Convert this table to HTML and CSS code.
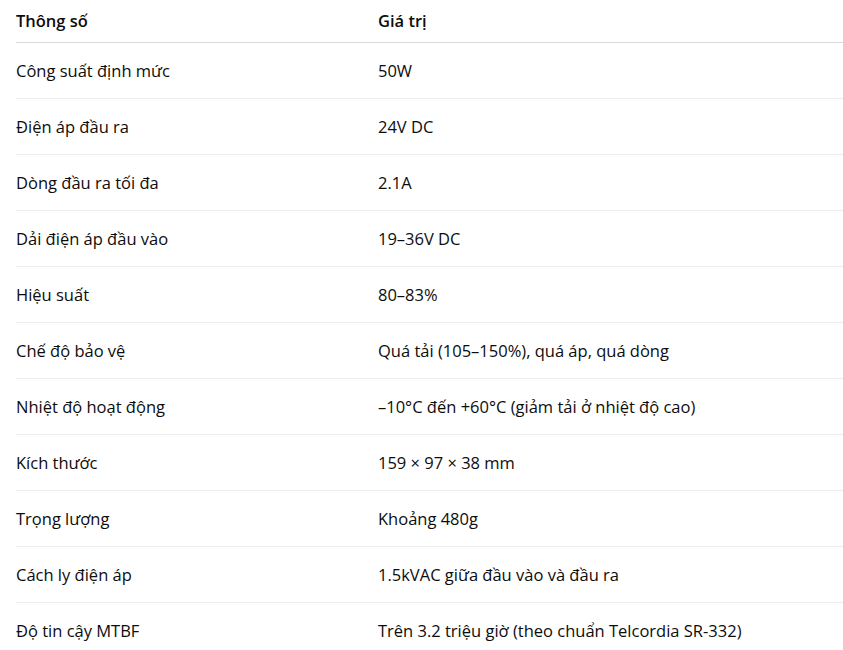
FILE: index.html
```html
<!DOCTYPE html>
<html lang="vi">
<head>
<meta charset="utf-8">
<link rel="stylesheet" href="styles.css">
</head>
<body>
<table class="spec">
  <thead>
    <tr><th class="c1">Thông số</th><th class="c2">Giá trị</th></tr>
  </thead>
  <tbody>
    <tr><td class="c1">Công suất định mức</td><td class="c2">50W</td></tr>
    <tr><td class="c1">Điện áp đầu ra</td><td class="c2">24V DC</td></tr>
    <tr><td class="c1">Dòng đầu ra tối đa</td><td class="c2">2.1A</td></tr>
    <tr><td class="c1">Dải điện áp đầu vào</td><td class="c2">19–36V DC</td></tr>
    <tr><td class="c1">Hiệu suất</td><td class="c2">80–83%</td></tr>
    <tr><td class="c1">Chế độ bảo vệ</td><td class="c2">Quá tải (105–150%), quá áp, quá dòng</td></tr>
    <tr><td class="c1">Nhiệt độ hoạt động</td><td class="c2">–10°C đến +60°C (giảm tải ở nhiệt độ cao)</td></tr>
    <tr><td class="c1">Kích thước</td><td class="c2">159 × 97 × 38 mm</td></tr>
    <tr><td class="c1">Trọng lượng</td><td class="c2">Khoảng 480g</td></tr>
    <tr><td class="c1">Cách ly điện áp</td><td class="c2">1.5kVAC giữa đầu vào và đầu ra</td></tr>
    <tr><td class="c1">Độ tin cậy MTBF</td><td class="c2">Trên 3.2 triệu giờ (theo chuẩn Telcordia SR-332)</td></tr>
  </tbody>
</table>
</body>
</html>
```
FILE: styles.css
```css
html, body {
  margin: 0;
  padding: 0;
  background: #ffffff;
}
body {
  font-family: "Open Sans", "Noto Sans", sans-serif;
  font-size: 16.5px;
  color: #0d0d0d;
}
.spec {
  border-collapse: collapse;
  margin-left: 16px;
  width: 827px;
}
.spec th {
  text-align: left;
  font-weight: 600;
  height: 42px;
  padding: 0;
  vertical-align: middle;
  border-bottom: 1px solid #d9d9d9;
  box-sizing: border-box;
}
.spec td {
  height: 56px;
  padding: 1px 0 0;
  vertical-align: middle;
  border-bottom: 1px solid #ececec;
  box-sizing: border-box;
}
.spec .c1 {
  width: 362px;
}
```
